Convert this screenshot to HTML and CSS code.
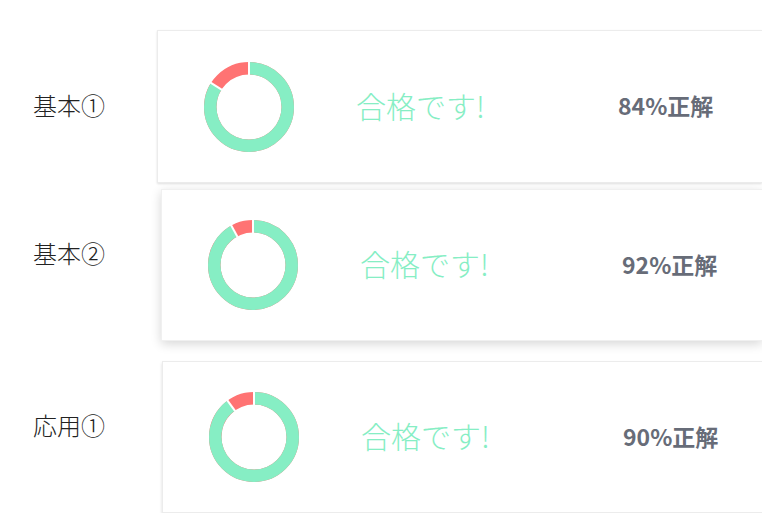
FILE: index.html
```html
<!DOCTYPE html>
<html lang="ja">
<head>
    <meta charset="UTF-8">
    <meta name="viewport" content="width=device-width, initial-scale=1.0">
    <title>結果</title>
    <link rel="stylesheet" href="styles.css">
</head>
<body>
    <div class="list">
        <div class="row row-1">
            <div class="label">基本①</div>
            <div class="card">
                <svg class="donut" width="90" height="90" viewBox="0 0 90 90">
                    <circle class="miss" cx="45" cy="45" r="38.75"></circle>
                    <circle class="hit" cx="45" cy="45" r="38.75" stroke-dasharray="204.51 300" transform="rotate(-90 45 45)"></circle>
                    <line class="gap" x1="45" y1="13" x2="45" y2="0"></line>
                    <line class="gap" x1="17.98" y1="27.85" x2="6.16" y2="20.35"></line>
                </svg>
                <div class="verdict">合格です!</div>
                <div class="score">84%正解</div>
            </div>
        </div>
        <div class="row row-2">
            <div class="label">基本②</div>
            <div class="card">
                <svg class="donut" width="90" height="90" viewBox="0 0 90 90">
                    <circle class="miss" cx="45" cy="45" r="38.75"></circle>
                    <circle class="hit" cx="45" cy="45" r="38.75" stroke-dasharray="223.99 300" transform="rotate(-90 45 45)"></circle>
                    <line class="gap" x1="45" y1="13" x2="45" y2="0"></line>
                    <line class="gap" x1="29.58" y1="16.96" x2="22.84" y2="4.69"></line>
                </svg>
                <div class="verdict">合格です!</div>
                <div class="score">92%正解</div>
            </div>
        </div>
        <div class="row row-3">
            <div class="label">応用①</div>
            <div class="card">
                <svg class="donut" width="90" height="90" viewBox="0 0 90 90">
                    <circle class="miss" cx="45" cy="45" r="38.75"></circle>
                    <circle class="hit" cx="45" cy="45" r="38.75" stroke-dasharray="219.12 300" transform="rotate(-90 45 45)"></circle>
                    <line class="gap" x1="45" y1="13" x2="45" y2="0"></line>
                    <line class="gap" x1="26.19" y1="19.11" x2="17.96" y2="7.79"></line>
                </svg>
                <div class="verdict">合格です!</div>
                <div class="score">90%正解</div>
            </div>
        </div>
    </div>
</body>
</html>
```

FILE: styles.css
```css
body {
    margin: 0;
    background-color: white;
    overflow: hidden;
    font-family: "Noto Sans CJK JP", "Noto Sans", sans-serif;
}
.list {
    padding-top: 30px;
}
.row {
    display: flex;
    align-items: center;
}
.row-2 {
    margin-top: 6px;
}
.row-3 {
    margin-top: 20px;
}
.label {
    flex: 0 0 auto;
    box-sizing: border-box;
    width: 157px;
    padding-left: 33px;
    padding-bottom: 4px;
    font-size: 24px;
    line-height: 1;
    font-weight: 300;
    color: #222;
}
.row-2 .label {
    width: 161px;
    padding-bottom: 24px;
}
.row-3 .label {
    width: 162px;
    padding-bottom: 24px;
}
.card {
    flex: 1 1 auto;
    box-sizing: border-box;
    height: 153px;
    padding-left: 46px;
    display: flex;
    align-items: center;
    background-color: white;
    border: 1px solid #ececec;
    border-right: none;
    box-shadow: 0 1px 2px rgba(0, 0, 0, 0.12);
}
.row-2 .card {
    height: 152px;
    border-color: #f0f0f0;
    box-shadow: 0 3px 10px rgba(0, 0, 0, 0.16);
}
.row-3 .card {
    height: 152px;
    box-shadow: 0 2px 3px rgba(0, 0, 0, 0.14);
}
.donut {
    flex: 0 0 auto;
    overflow: visible;
}
.miss {
    fill: none;
    stroke: #ff7373;
    stroke-width: 12.5;
}
.hit {
    fill: none;
    stroke: #86eec4;
    stroke-width: 12.5;
}
.gap {
    stroke: white;
    stroke-width: 2;
}
.verdict {
    box-sizing: border-box;
    width: 324px;
    padding-left: 62px;
    padding-bottom: 4px;
    font-size: 30px;
    line-height: 1;
    font-weight: 300;
    color: #86eec4;
}
.score {
    padding-bottom: 2px;
    font-size: 23px;
    line-height: 1;
    font-weight: bold;
    color: #676c78;
}
```
